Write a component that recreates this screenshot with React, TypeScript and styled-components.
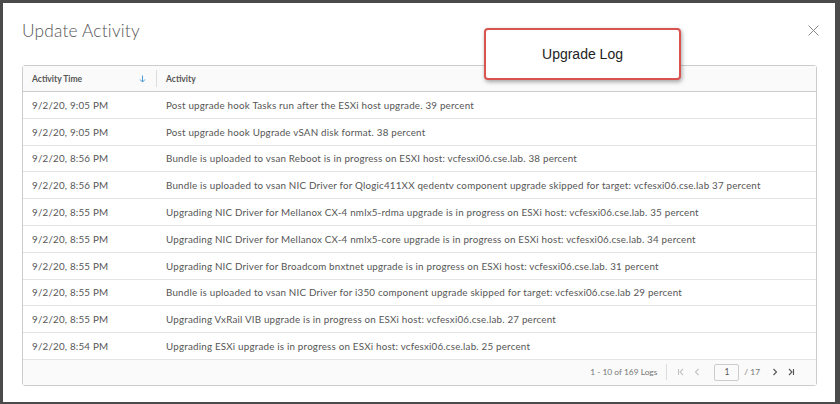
import React from "react";
import styled, { createGlobalStyle } from "styled-components";

const Global = createGlobalStyle`
  html, body { margin: 0; padding: 0; }
  body { background: #4b4b4b; width: 840px; height: 404px; overflow: hidden; font-family: Lato, "Open Sans", sans-serif; }
`;

const Page = styled.div`
  width: 840px;
  height: 404px;
  padding: 3px 7px 2px 3px;
  box-sizing: border-box;
  display: flex;
`;

const Modal = styled.div`
  flex: 1;
  background: #fff;
  position: relative;
  padding: 0 18px 0 19px;
  display: flex;
  flex-direction: column;
`;

const Header = styled.div`
  height: 62px;
  display: flex;
  align-items: flex-start;
  justify-content: space-between;
  padding-top: 17px;
  box-sizing: border-box;
`;

const Title = styled.h1`
  margin: 0;
  font-family: Lato, sans-serif;
  font-weight: 300;
  font-size: 17.3px;
  color: #555;
  letter-spacing: 0.2px;
`;

const Close = styled.button`
  border: 0;
  background: none;
  padding: 0;
  margin: 5px -2px 0 0;
  width: 11px;
  height: 11px;
  display: flex;
`;

const Callout = styled.div`
  position: absolute;
  left: 481px;
  top: 25px;
  width: 193px;
  height: 48px;
  border: 2px solid #d9534f;
  border-radius: 4px;
  background: #fff;
  box-shadow: 1px 2px 4px rgba(0, 0, 0, 0.35);
  display: flex;
  align-items: center;
  justify-content: center;
  font-family: Arial, "Liberation Sans", sans-serif;
  font-size: 14px;
  color: #222;
`;

const Grid = styled.div`
  width: 793px;
  border: 1px solid #ccc;
  border-radius: 3px;
  display: flex;
  flex-direction: column;
`;

const HeadRow = styled.div`
  display: grid;
  grid-template-columns: 134px 1fr;
  height: 25px;
  background: #fafafa;
  border-bottom: 1px solid #ccc;
  align-items: center;
`;

const HeadCell = styled.div<{ $divider?: boolean }>`
  display: flex;
  align-items: center;
  justify-content: space-between;
  padding: 0 10px 0 9px;
  height: 17px;
  font-size: 8.5px;
  font-weight: 700;
  color: #565656;
  border-right: ${(p) => (p.$divider ? "1px solid #ddd" : "none")};
`;

const Row = styled.div`
  display: grid;
  grid-template-columns: 134px 1fr;
  height: 26.8px;
  border-bottom: 1px solid #e4e4e4;
  box-sizing: border-box;
  align-items: center;
  font-family: Lato, sans-serif;
  font-size: 9.8px;
  letter-spacing: 0.2px;
  color: #565656;
  &:last-of-type { border-bottom: 1px solid #ccc; }
`;

const Cell = styled.div<{ $pl: number }>`
  padding-left: ${(p) => p.$pl}px;
  white-space: nowrap;
`;

const Footer = styled.div`
  height: 25px;
  background: #fafafa;
  display: flex;
  align-items: center;
  justify-content: flex-end;
  padding-right: 17px;
  font-size: 8.4px;
  color: #777;
`;

const Count = styled.span`
  padding-right: 9px;
  border-right: 1px solid #ddd;
  height: 16px;
  display: flex;
  align-items: center;
`;

const Pager = styled.div`
  display: flex;
  align-items: center;
  padding-left: 6px;
`;

const PgBtn = styled.span<{ $off?: boolean }>`
  display: flex;
  width: 16px;
  justify-content: center;
  color: ${(p) => (p.$off ? "#c4c4c4" : "#555")};
`;

const PageInput = styled.div`
  width: 25px;
  height: 17px;
  border: 1px solid #ccc;
  border-radius: 2px;
  box-sizing: border-box;
  display: flex;
  align-items: center;
  justify-content: center;
  margin: 0 5px 0 9px;
  color: #555;
  font-size: 8.5px;
`;

const Total = styled.span`
  margin-right: 7px;
`;

const rows: [string, string][] = [
  ["9/2/20, 9:05 PM", "Post upgrade hook Tasks run after the ESXi host upgrade. 39 percent"],
  ["9/2/20, 9:05 PM", "Post upgrade hook Upgrade vSAN disk format. 38 percent"],
  ["9/2/20, 8:56 PM", "Bundle is uploaded to vsan Reboot is in progress on ESXI host: vcfesxi06.cse.lab. 38 percent"],
  ["9/2/20, 8:56 PM", "Bundle is uploaded to vsan NIC Driver for Qlogic411XX qedentv component upgrade skipped for target: vcfesxi06.cse.lab 37 percent"],
  ["9/2/20, 8:55 PM", "Upgrading NIC Driver for Mellanox CX-4 nmlx5-rdma upgrade is in progress on ESXi host: vcfesxi06.cse.lab. 35 percent"],
  ["9/2/20, 8:55 PM", "Upgrading NIC Driver for Mellanox CX-4 nmlx5-core upgrade is in progress on ESXi host: vcfesxi06.cse.lab. 34 percent"],
  ["9/2/20, 8:55 PM", "Upgrading NIC Driver for Broadcom bnxtnet upgrade is in progress on ESXi host: vcfesxi06.cse.lab. 31 percent"],
  ["9/2/20, 8:55 PM", "Bundle is uploaded to vsan NIC Driver for i350 component upgrade skipped for target: vcfesxi06.cse.lab 29 percent"],
  ["9/2/20, 8:55 PM", "Upgrading VxRail VIB upgrade is in progress on ESXi host: vcfesxi06.cse.lab. 27 percent"],
  ["9/2/20, 8:54 PM", "Upgrading ESXi upgrade is in progress on ESXi host: vcfesxi06.cse.lab. 25 percent"],
];

const Chev = ({ d }: { d: string }) => (
  <svg width="8" height="8" viewBox="0 0 8 8" fill="none" stroke="currentColor" strokeWidth="1.1">
    <path d={d} />
  </svg>
);

export default function App() {
  return (
    <>
      <Global />
      <Page>
        <Modal>
          <Header>
            <Title>Update Activity</Title>
            <Close aria-label="close">
              <svg width="11" height="11" viewBox="0 0 11 11" stroke="#8a8a8a" strokeWidth="1">
                <path d="M0.5 0.5 L10.5 10.5 M10.5 0.5 L0.5 10.5" />
              </svg>
            </Close>
          </Header>
          <Callout>Upgrade Log</Callout>
          <Grid>
            <HeadRow>
              <HeadCell $divider>
                <span>Activity Time</span>
                <svg width="7" height="8" viewBox="0 0 7 8" fill="none" stroke="#4a9ad4" strokeWidth="1">
                  <path d="M3.5 0.5 V7 M1 4.5 L3.5 7 L6 4.5" />
                </svg>
              </HeadCell>
              <HeadCell>
                <span>Activity</span>
              </HeadCell>
            </HeadRow>
            {rows.map(([t, a], i) => (
              <Row key={i}>
                <Cell $pl={9}>{t}</Cell>
                <Cell $pl={9}>{a}</Cell>
              </Row>
            ))}
            <Footer>
              <Count>1 - 10 of 169 Logs</Count>
              <Pager>
                <PgBtn $off><Chev d="M1.5 1 V7 M6 1 L3 4 L6 7" /></PgBtn>
                <PgBtn $off><Chev d="M5.5 1 L2.5 4 L5.5 7" /></PgBtn>
                <PageInput>1</PageInput>
                <Total>/ 17</Total>
                <PgBtn><Chev d="M2.5 1 L5.5 4 L2.5 7" /></PgBtn>
                <PgBtn><Chev d="M2 1 L5 4 L2 7 M6.5 1 V7" /></PgBtn>
              </Pager>
            </Footer>
          </Grid>
        </Modal>
      </Page>
    </>
  );
}
